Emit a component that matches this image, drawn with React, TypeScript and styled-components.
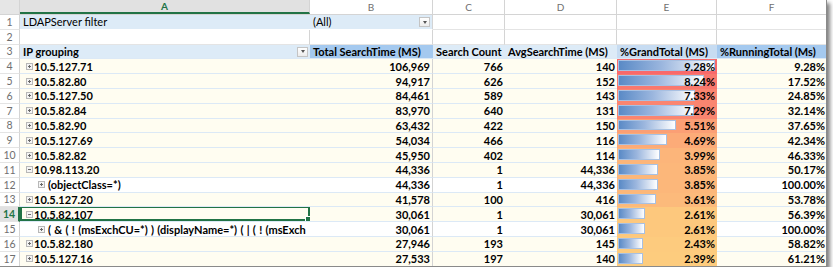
import React from 'react';
import styled, { createGlobalStyle, css } from 'styled-components';

const COLS = '20px 290px 123px 72px 112px 100px 110px';
const ROW_H = 14.8;
const MAX = 9.28;

const Global = createGlobalStyle`
  html, body { margin: 0; padding: 0; background: #ffffff; }
`;

const Sheet = styled.div`
  width: 827px;
  height: 267px;
  overflow: hidden;
  background: #ffffff;
  box-sizing: border-box;
  border-right: 1px solid #8a8a8a;
  border-bottom: 1px solid #8a8a8a;
  box-shadow: 3px 3px 4px rgba(0, 0, 0, 0.5);
  font-family: Lato, "Open Sans", sans-serif;
  font-size: 11px;
  color: #000;
`;

const HeaderRow = styled.div`
  display: grid;
  grid-template-columns: ${COLS};
  height: 15px;
  box-sizing: border-box;
  border-bottom: 1px solid #d4d4d4;
`;

const Corner = styled.div`
  background: #e6e6e6;
  border-right: 1px solid #d4d4d4;
`;

const ColHead = styled.div<{ $active?: boolean }>`
  display: flex;
  align-items: center;
  justify-content: center;
  box-sizing: border-box;
  border-right: 1px solid #d4d4d4;
  color: #6f6f6f;
  font-size: 10px;
  ${(p) =>
    p.$active &&
    css`
      background: #e1e1e1;
      color: #217346;
      font-weight: 700;
      border-bottom: 2px solid #217346;
    `}
`;

const Row = styled.div`
  display: grid;
  grid-template-columns: ${COLS};
  height: ${ROW_H}px;
`;

const RowNum = styled.div<{ $active?: boolean }>`
  display: flex;
  align-items: center;
  justify-content: center;
  box-sizing: border-box;
  border-right: 1px solid #d4d4d4;
  border-bottom: 1px solid #e4e4e4;
  color: #6f6f6f;
  font-size: 10.5px;
  ${(p) =>
    p.$active &&
    css`
      background: #e1e1e1;
      color: #217346;
      font-weight: 700;
      border-right: 2px solid #217346;
    `}
`;

const Cell = styled.div<{
  $bg?: string;
  $right?: boolean;
  $bold?: boolean;
  $line?: string;
  $vline?: boolean;
}>`
  position: relative;
  display: flex;
  align-items: center;
  justify-content: ${(p) => (p.$right ? 'flex-end' : 'flex-start')};
  box-sizing: border-box;
  padding: 0 2px 0 3px;
  background: ${(p) => p.$bg || 'transparent'};
  border-bottom: 1px solid ${(p) => p.$line || 'transparent'};
  ${(p) => p.$vline && css`border-right: 1px solid #d4d4d4;`}
  font-weight: ${(p) => (p.$bold ? 700 : 400)};
  white-space: nowrap;
  overflow: hidden;
`;

const Label = styled.span<{ $wide?: boolean }>`
  position: relative;
  z-index: 1;
  ${(p) => p.$wide && css`word-spacing: 0.6px;`}
`;

const Toggle = styled.span<{ $open?: boolean; $child?: boolean }>`
  position: relative;
  flex: none;
  width: 7px;
  height: 7px;
  box-sizing: border-box;
  border: 1px solid #b8b8b8;
  background: #f4f4f4;
  margin-left: ${(p) => (p.$child ? '15px' : '3px')};
  margin-right: ${(p) => (p.$child ? '3px' : '1px')};
  &::before {
    content: '';
    position: absolute;
    left: 1px;
    right: 1px;
    top: 2px;
    height: 1px;
    background: #6a6a6a;
  }
  ${(p) =>
    !p.$open &&
    css`
      &::after {
        content: '';
        position: absolute;
        top: 1px;
        bottom: 1px;
        left: 2px;
        width: 1px;
        background: #6a6a6a;
      }
    `}
`;

const DropBtn = styled.span`
  position: absolute;
  right: 2px;
  top: 2px;
  width: 11px;
  height: 10px;
  box-sizing: border-box;
  border: 1px solid #c4c4c4;
  background: linear-gradient(#ffffff, #ececec);
  display: flex;
  align-items: center;
  justify-content: center;
  &::after {
    content: '';
    border-left: 2.5px solid transparent;
    border-right: 2.5px solid transparent;
    border-top: 3px solid #555;
  }
`;

const Bar = styled.span`
  position: absolute;
  left: 1px;
  top: 1px;
  bottom: 2px;
  box-sizing: border-box;
  border: 1px solid #a7c0e2;
  background: linear-gradient(90deg, #5a8ac6 0%, #9bb6de 45%, #ffffff 100%);
`;

const Selection = styled.span`
  position: absolute;
  left: 0;
  top: -1px;
  right: 0;
  bottom: 0;
  border: 2px solid #217346;
  pointer-events: none;
  &::after {
    content: '';
    position: absolute;
    right: -4px;
    bottom: -4px;
    width: 5px;
    height: 5px;
    background: #217346;
    border: 1px solid #fff;
  }
`;

type DataRow = {
  n: number;
  name: string;
  total: string;
  count: string;
  avg: string;
  pct: number;
  running: string;
  child?: boolean;
  open?: boolean;
  active?: boolean;
};

const rows: DataRow[] = [
  { n: 4, name: '10.5.127.71', total: '106,969', count: '766', avg: '140', pct: 9.28, running: '9.28%' },
  { n: 5, name: '10.5.82.80', total: '94,917', count: '626', avg: '152', pct: 8.24, running: '17.52%' },
  { n: 6, name: '10.5.127.50', total: '84,461', count: '589', avg: '143', pct: 7.33, running: '24.85%' },
  { n: 7, name: '10.5.82.84', total: '83,970', count: '640', avg: '131', pct: 7.29, running: '32.14%' },
  { n: 8, name: '10.5.82.90', total: '63,432', count: '422', avg: '150', pct: 5.51, running: '37.65%' },
  { n: 9, name: '10.5.127.69', total: '54,034', count: '466', avg: '116', pct: 4.69, running: '42.34%' },
  { n: 10, name: '10.5.82.82', total: '45,950', count: '402', avg: '114', pct: 3.99, running: '46.33%' },
  { n: 11, name: '10.98.113.20', total: '44,336', count: '1', avg: '44,336', pct: 3.85, running: '50.17%', open: true },
  { n: 12, name: '(objectClass=*)', total: '44,336', count: '1', avg: '44,336', pct: 3.85, running: '100.00%', child: true },
  { n: 13, name: '10.5.127.20', total: '41,578', count: '100', avg: '416', pct: 3.61, running: '53.78%' },
  { n: 14, name: '10.5.82.107', total: '30,061', count: '1', avg: '30,061', pct: 2.61, running: '56.39%', open: true, active: true },
  {
    n: 15,
    name: '( & ( ! (msExchCU=*) ) (displayName=*) ( | ( ! (msExch',
    total: '30,061',
    count: '1',
    avg: '30,061',
    pct: 2.61,
    running: '100.00%',
    child: true,
  },
  { n: 16, name: '10.5.82.180', total: '27,946', count: '193', avg: '145', pct: 2.43, running: '58.82%' },
  { n: 17, name: '10.5.127.16', total: '27,533', count: '197', avg: '140', pct: 2.39, running: '61.21%' },
];

function scaleColor(v: number): string {
  const lo = { r: 0xf8, g: 0x69, b: 0x6b };
  const hi = { r: 0xff, g: 0xeb, b: 0x84 };
  const mid = 0.2;
  const t = Math.max(0, Math.min(1, (MAX - v) / (MAX - mid)));
  const c = (a: number, b: number) => Math.round(a + (b - a) * t);
  return `rgb(${c(lo.r, hi.r)}, ${c(lo.g, hi.g)}, ${c(lo.b, hi.b)})`;
}

const CREAM = '#fffdf1';
const LINE = '#dce9f6';
const LIGHT_BLUE = '#ddebf7';
const HEAD_BLUE = '#a4c9ef';

export default function App() {
  return (
    <>
      <Global />
      <Sheet>
        <HeaderRow>
          <Corner />
          <ColHead $active>A</ColHead>
          <ColHead>B</ColHead>
          <ColHead>C</ColHead>
          <ColHead>D</ColHead>
          <ColHead>E</ColHead>
          <ColHead>F</ColHead>
        </HeaderRow>

        <Row>
          <RowNum>1</RowNum>
          <Cell $bg={LIGHT_BLUE} $line="#ffffff">LDAPServer filter</Cell>
          <Cell $bg={LIGHT_BLUE} $line="#ffffff" $vline>
            (All)
            <DropBtn />
          </Cell>
          <Cell $line="#e4e4e4" $vline />
          <Cell $line="#e4e4e4" $vline />
          <Cell $line="#e4e4e4" $vline />
          <Cell $line="#e4e4e4" />
        </Row>

        <Row>
          <RowNum>2</RowNum>
          <Cell $line="#e4e4e4" $vline />
          <Cell $line="#e4e4e4" $vline />
          <Cell $line="#e4e4e4" $vline />
          <Cell $line="#e4e4e4" $vline />
          <Cell $line="#e4e4e4" $vline />
          <Cell $line="#e4e4e4" />
        </Row>

        <Row>
          <RowNum>3</RowNum>
          <Cell $bg={LIGHT_BLUE} $bold $line={LINE}>
            IP grouping
            <DropBtn />
          </Cell>
          <Cell $bg={HEAD_BLUE} $bold $line={LINE}>Total SearchTime (MS)</Cell>
          <Cell $bg={LIGHT_BLUE} $bold $line={LINE}>Search Count</Cell>
          <Cell $bg={LIGHT_BLUE} $bold $line={LINE}>AvgSearchTime (MS)</Cell>
          <Cell $bg="#c7dcf2" $bold $line={LINE}>%GrandTotal (MS)</Cell>
          <Cell $bg={HEAD_BLUE} $bold $line={LINE}>%RunningTotal (Ms)</Cell>
        </Row>

        {rows.map((r) => {
          const bg = r.child ? '#ffffff' : CREAM;
          return (
            <Row key={r.n}>
              <RowNum $active={r.active}>{r.n}</RowNum>
              <Cell $bg={bg} $bold $line={LINE}>
                <Toggle $open={r.open} $child={r.child} />
                <Label $wide={r.child}>{r.name}</Label>
                {r.active && <Selection />}
              </Cell>
              <Cell $bg={bg} $bold $right $line={LINE} $vline>{r.total}</Cell>
              <Cell $bg={bg} $bold $right $line={LINE}>{r.count}</Cell>
              <Cell $bg={bg} $bold $right $line={LINE}>{r.avg}</Cell>
              <Cell $bg={scaleColor(r.pct)} $bold $right $line={scaleColor(r.pct)}>
                <Bar style={{ width: `${(r.pct / MAX) * 97}px` }} />
                <Label>{r.pct.toFixed(2)}%</Label>
              </Cell>
              <Cell $bg={bg} $bold $right $line={LINE}>{r.running}</Cell>
            </Row>
          );
        })}
      </Sheet>
    </>
  );
}
